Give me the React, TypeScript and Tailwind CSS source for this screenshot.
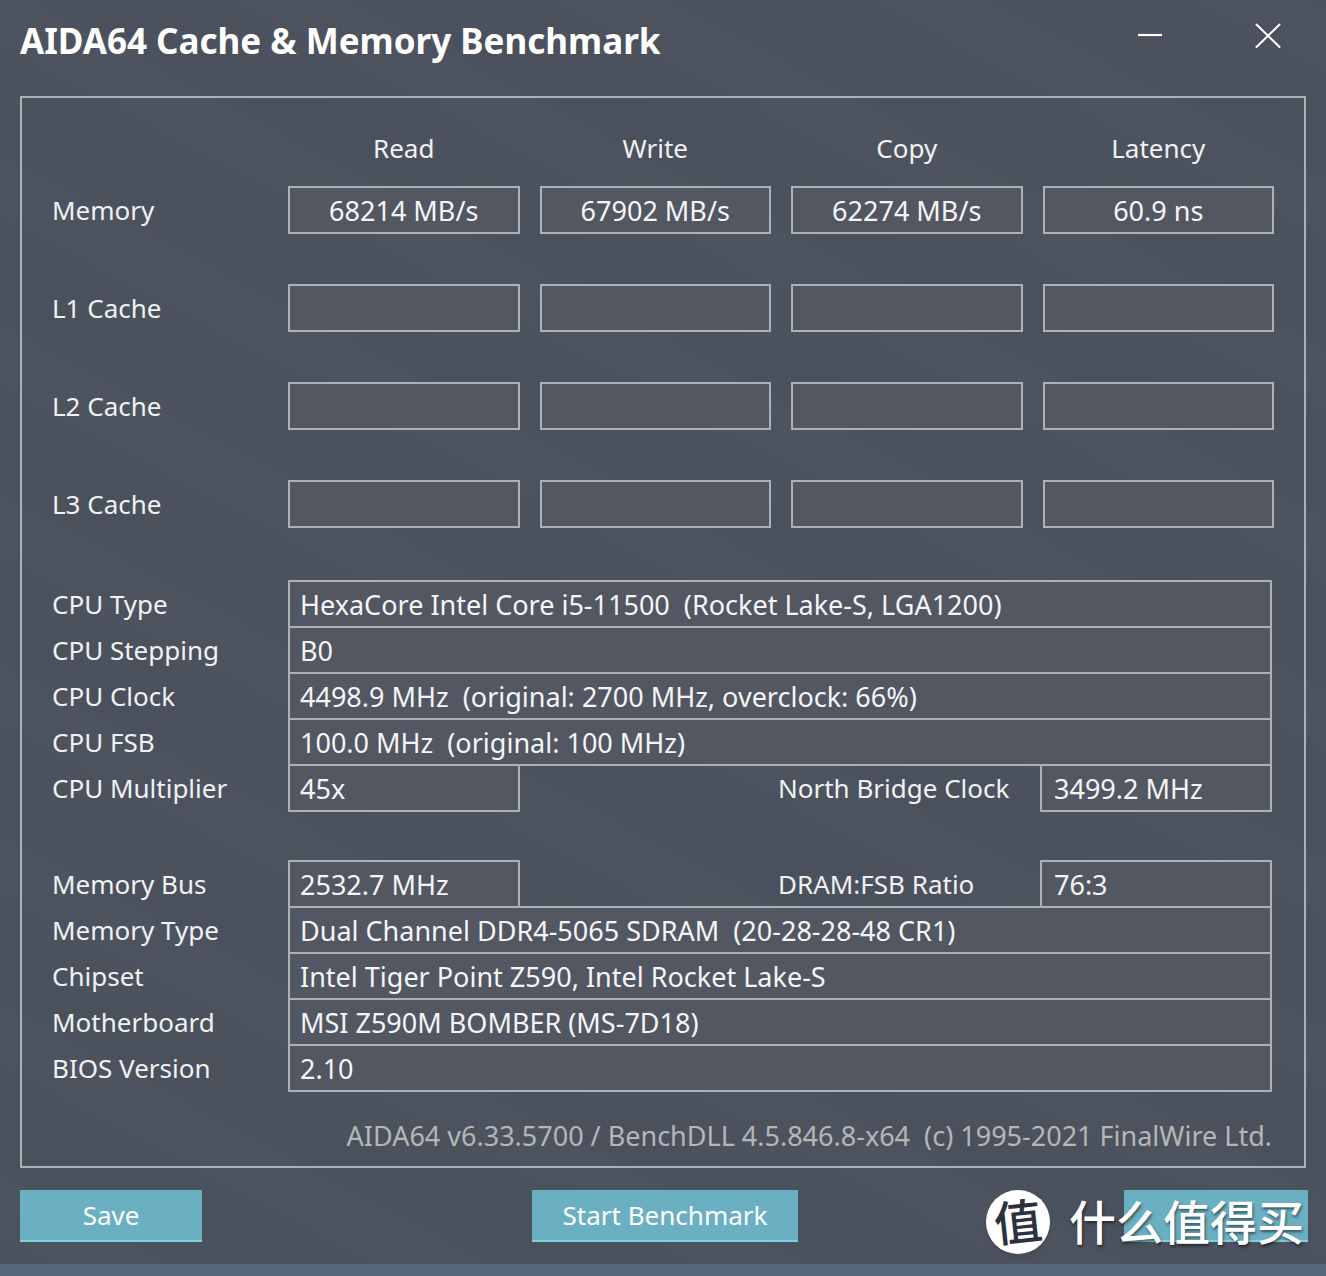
import React from "react";

const columns = ["Read", "Write", "Copy", "Latency"];

const results = [
  { name: "Memory", values: ["68214 MB/s", "67902 MB/s", "62274 MB/s", "60.9 ns"] },
  { name: "L1 Cache", values: ["", "", "", ""] },
  { name: "L2 Cache", values: ["", "", "", ""] },
  { name: "L3 Cache", values: ["", "", "", ""] },
];

const box =
  "h-12 min-w-0 rounded-none border-2 border-[#abb2b5] bg-[#525762] text-[27px] text-[#f4f5f6] outline-none";

function WideRow({ id, label, value }: { id: string; label: string; value: string }) {
  return (
    <div className="flex items-center">
      <label htmlFor={id} className="w-[236px] shrink-0">
        {label}
      </label>
      <input id={id} readOnly value={value} className={`${box} flex-1 px-2.5`} />
    </div>
  );
}

function SplitRow(props: { id: string; label: string; value: string; label2: string; value2: string }) {
  return (
    <div className="flex items-center">
      <label htmlFor={props.id} className="w-[236px] shrink-0">
        {props.label}
      </label>
      <input id={props.id} readOnly value={props.value} className={`${box} w-[232px] px-2.5`} />
      <label htmlFor={`${props.id}-2`} className="ml-auto w-[262px] shrink-0">
        {props.label2}
      </label>
      <input id={`${props.id}-2`} readOnly value={props.value2} className={`${box} w-[232px] px-3`} />
    </div>
  );
}

const button = "h-13 border-b-2 border-[#7ed2e0] bg-[#6bb0c2] text-[26px] text-white";

export default function App() {
  return (
    <div className="min-h-screen bg-[#55657a] pb-3 font-['Noto_Sans','Noto_Sans_CJK_SC',sans-serif] text-[26px] leading-9 text-[#eff1f2]">
      <main className="bg-[#4b525d] bg-[repeating-linear-gradient(28deg,#ffffff00_0px,#ffffff03_70px,#00000004_95px,#ffffff00_150px)] px-5 pb-5.5">
        <header className="flex h-24 items-start justify-between">
          <h1 className="pt-4 text-[35px] leading-[50px] font-bold text-white">AIDA64 Cache &amp; Memory Benchmark</h1>
          <div className="flex gap-[92px] pt-[22px] pr-[25px]">
            <button aria-label="Minimize" className="size-[26px]">
              <svg viewBox="0 0 26 26" className="size-full" stroke="#fff" strokeWidth="2.2">
                <path d="M1 13H25" />
              </svg>
            </button>
            <button aria-label="Close window" className="size-[26px]">
              <svg viewBox="0 0 26 26" className="size-full" stroke="#fff" strokeWidth="2" strokeLinecap="round">
                <path d="M1.5 2.5L24.5 25M24.5 2.5L1.5 25" />
              </svg>
            </button>
          </div>
        </header>

        <section className="border-2 border-[#abb2b5] px-[30px] pb-3">
          <table className="w-full table-fixed border-collapse">
            <thead>
              <tr className="h-[88px]">
                <td className="w-[216px]" />
                {columns.map((c) => (
                  <th key={c} scope="col" className="pt-3 pl-5 font-normal">
                    {c}
                  </th>
                ))}
              </tr>
            </thead>
            <tbody>
              {results.map((r) => (
                <tr key={r.name} className="h-[98px] align-top">
                  <th scope="row" className="pt-1.5 text-left font-normal">
                    {r.name}
                  </th>
                  {r.values.map((v, i) => (
                    <td key={columns[i]} className="pl-5">
                      <input
                        readOnly
                        aria-label={`${r.name} ${columns[i]}`}
                        value={v}
                        className={`${box} block w-full text-center`}
                      />
                    </td>
                  ))}
                </tr>
              ))}
            </tbody>
          </table>

          <div className="mt-0.5 pr-0.5">
            <div className="flex flex-col [&>*+*]:-mt-0.5">
              <WideRow id="cpu-type" label="CPU Type" value="HexaCore Intel Core i5-11500  (Rocket Lake-S, LGA1200)" />
              <WideRow id="cpu-stepping" label="CPU Stepping" value="B0" />
              <WideRow id="cpu-clock" label="CPU Clock" value="4498.9 MHz  (original: 2700 MHz, overclock: 66%)" />
              <WideRow id="cpu-fsb" label="CPU FSB" value="100.0 MHz  (original: 100 MHz)" />
              <SplitRow id="cpu-mult" label="CPU Multiplier" value="45x" label2="North Bridge Clock" value2="3499.2 MHz" />
            </div>
            <div className="mt-12 flex flex-col [&>*+*]:-mt-0.5">
              <SplitRow id="mem-bus" label="Memory Bus" value="2532.7 MHz" label2="DRAM:FSB Ratio" value2="76:3" />
              <WideRow id="mem-type" label="Memory Type" value="Dual Channel DDR4-5065 SDRAM  (20-28-28-48 CR1)" />
              <WideRow id="chipset" label="Chipset" value="Intel Tiger Point Z590, Intel Rocket Lake-S" />
              <WideRow id="board" label="Motherboard" value="MSI Z590M BOMBER (MS-7D18)" />
              <WideRow id="bios" label="BIOS Version" value="2.10" />
            </div>
            <p className="mt-[26px] text-right text-[27px] leading-9 whitespace-pre text-[#b5b6b7]">
              {"AIDA64 v6.33.5700 / BenchDLL 4.5.846.8-x64  (c) 1995-2021 FinalWire Ltd."}
            </p>
          </div>
        </section>

        <footer className="relative mt-5.5 -mr-0.5 flex justify-between">
          <button className={`${button} w-[182px]`}>Save</button>
          <button className={`${button} ml-1 w-[266px]`}>Start Benchmark</button>
          <button className={`${button} w-[184px]`} aria-label="Close" />
          <div className="absolute top-0 right-1 flex items-center gap-[19px] text-white">
            <span className="flex size-16 items-center justify-center rounded-full bg-white text-[48px] leading-none font-medium text-[#2c3140] shadow-md">
              <span className="-rotate-6">值</span>
            </span>
            <span className="text-[47px] leading-[60px] font-medium [text-shadow:1px_2px_3px_#0008]">什么值得买</span>
          </div>
        </footer>
      </main>
    </div>
  );
}
